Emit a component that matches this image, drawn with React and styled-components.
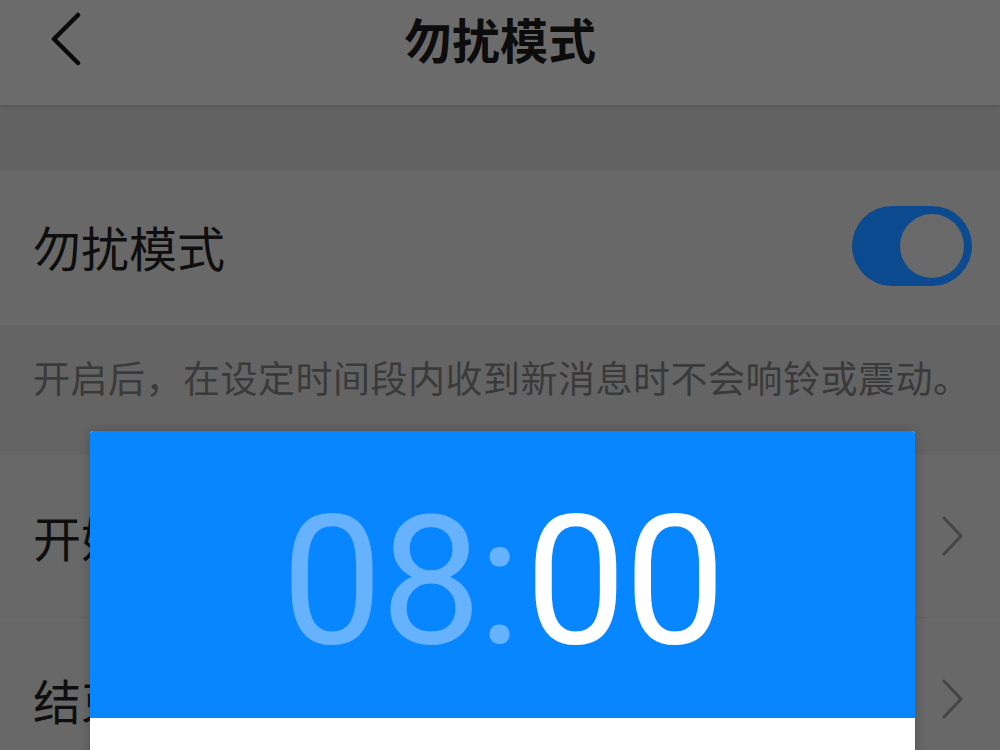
import React from 'react';
import styled, { createGlobalStyle } from 'styled-components';

const GlobalStyle = createGlobalStyle`
  html, body {
    margin: 0;
    padding: 0;
    background: #676767;
  }
  * {
    box-sizing: border-box;
  }
`;

const Screen = styled.div`
  position: relative;
  width: 1000px;
  height: 750px;
  overflow: hidden;
  font-family: "Noto Sans CJK SC", "Noto Sans", sans-serif;
  background: #676767;
`;

const Header = styled.header`
  height: 105px;
  display: grid;
  grid-template-columns: 120px 1fr 120px;
  align-items: center;
  background: #6b6b6b;
  box-shadow: 0 2px 3px rgba(0, 0, 0, 0.12);
  position: relative;
  z-index: 1;
`;

const BackButton = styled.button`
  border: 0;
  background: none;
  padding: 12px 0 0 50px;
  height: 105px;
  display: flex;
  align-items: flex-start;
  cursor: pointer;
`;

const Title = styled.h1`
  margin: 0;
  text-align: center;
  font-size: 48px;
  font-weight: 700;
  color: #0c0c0c;
  line-height: 1;
  padding-bottom: 30px;
`;

const Band = styled.div`
  height: 65px;
  background: #626262;
`;

const SwitchRow = styled.div`
  height: 155px;
  display: flex;
  align-items: center;
  justify-content: space-between;
  padding: 0 28px 0 33px;
  background: #686868;
  border-bottom: 3px solid #6b6b6b;
`;

const Label = styled.span`
  font-size: 48px;
  color: #0e0e0e;
  line-height: 1;
`;

const Toggle = styled.div`
  width: 120px;
  height: 80px;
  border-radius: 40px;
  background: #0b4a8e;
  display: flex;
  align-items: center;
  justify-content: ${(p) => (p.on ? 'flex-end' : 'flex-start')};
  padding: 0 8px;
`;

const Knob = styled.div`
  width: 64px;
  height: 64px;
  border-radius: 50%;
  background: #696969;
`;

const Note = styled.p`
  margin: 0;
  height: 130px;
  padding: 34px 33px 0;
  font-size: 37px;
  letter-spacing: 0.5px;
  line-height: 36px;
  color: #3a3a3a;
  background: #646464;
  white-space: nowrap;
`;

const ArrowRow = styled.div`
  height: 163px;
  display: flex;
  align-items: center;
  justify-content: space-between;
  padding: 0 36px 0 33px;
  background: #686868;
  border-bottom: 1px solid #636363;
`;

const Dialog = styled.div`
  position: absolute;
  top: 431px;
  left: 90px;
  width: 825px;
  height: 420px;
  background: #ffffff;
  border-radius: 3px 3px 0 0;
  overflow: hidden;
  box-shadow: 0 0 12px rgba(0, 0, 0, 0.2);
`;

const TimeHead = styled.div`
  height: 287px;
  background: #0786ff;
  display: flex;
  align-items: center;
  justify-content: center;
  padding-top: 14px;
  font-family: Roboto, "Noto Sans", sans-serif;
  font-weight: 400;
  font-size: 180px;
  line-height: 1;
`;

const TimePart = styled.span`
  color: ${(p) => (p.active ? '#ffffff' : '#66b2ff')};
  letter-spacing: -2px;
`;

const Colon = styled(TimePart)`
  margin: 0 6px 0 -2px;
`;

const Chevron = () => (
  <svg width="22" height="40" viewBox="0 0 22 40" fill="none">
    <polyline points="2,2 19,20 2,38" stroke="#454545" strokeWidth="3" strokeLinecap="round" strokeLinejoin="round" />
  </svg>
);

const BackIcon = () => (
  <svg width="32" height="54" viewBox="0 0 32 54" fill="none">
    <polyline points="28,3 4,27 28,51" stroke="#0a0a0a" strokeWidth="4.5" strokeLinecap="round" strokeLinejoin="round" />
  </svg>
);

const App = () => {
  const rows = ['开始时间', '结束时间'];

  return (
    <Screen>
      <GlobalStyle />
      <Header>
        <BackButton aria-label="back">
          <BackIcon />
        </BackButton>
        <Title>勿扰模式</Title>
        <span />
      </Header>
      <Band />
      <SwitchRow>
        <Label>勿扰模式</Label>
        <Toggle on>
          <Knob />
        </Toggle>
      </SwitchRow>
      <Note>开启后，在设定时间段内收到新消息时不会响铃或震动。</Note>
      {rows.map((r) => (
        <ArrowRow key={r}>
          <Label>{r}</Label>
          <Chevron />
        </ArrowRow>
      ))}

      <Dialog>
        <TimeHead>
          <TimePart>08</TimePart>
          <Colon>:</Colon>
          <TimePart active>00</TimePart>
        </TimeHead>
      </Dialog>
    </Screen>
  );
};

export default App;
